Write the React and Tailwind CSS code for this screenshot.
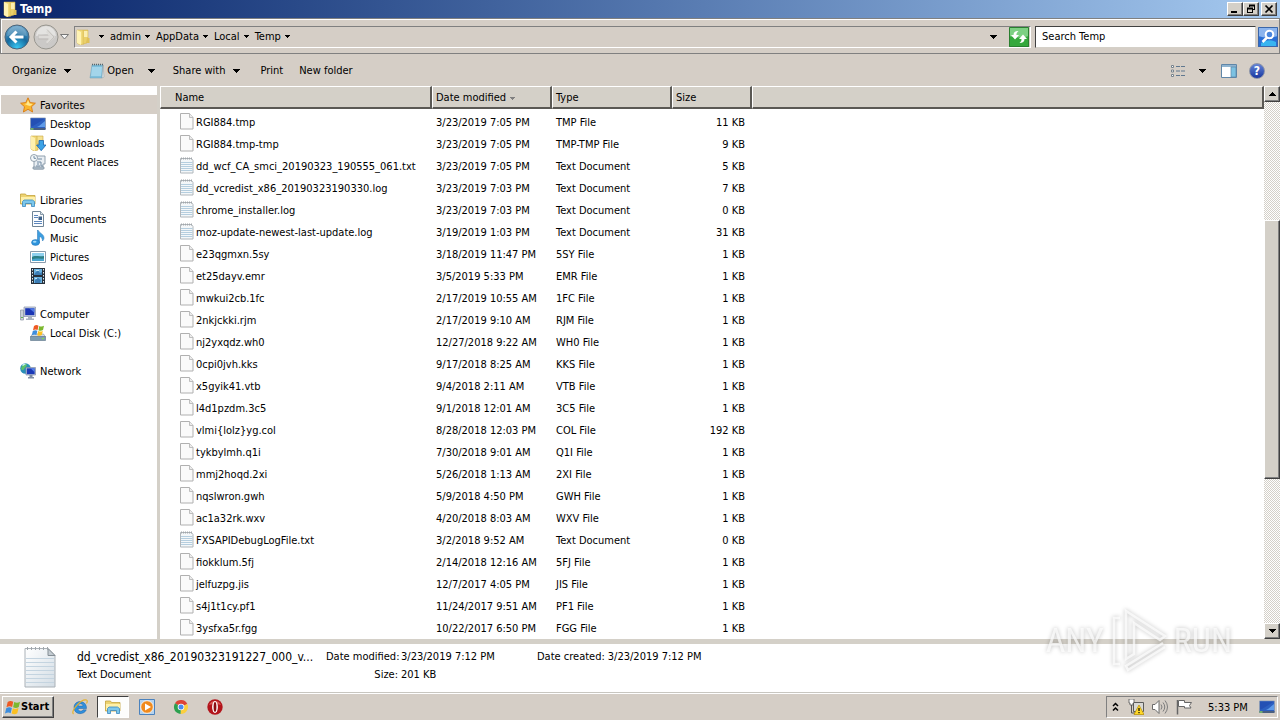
import { useId } from 'react';

/* ── Data ────────────────────────────────────────────────────────────────── */
const FILES = [
  ['RGI884.tmp', '3/23/2019 7:05 PM', 'TMP File', '11 KB'],
  ['RGI884.tmp-tmp', '3/23/2019 7:05 PM', 'TMP-TMP File', '9 KB'],
  ['dd_wcf_CA_smci_20190323_190555_061.txt', '3/23/2019 7:05 PM', 'Text Document', '5 KB'],
  ['dd_vcredist_x86_20190323190330.log', '3/23/2019 7:03 PM', 'Text Document', '7 KB'],
  ['chrome_installer.log', '3/23/2019 7:03 PM', 'Text Document', '0 KB'],
  ['moz-update-newest-last-update.log', '3/19/2019 1:03 PM', 'Text Document', '31 KB'],
  ['e23qgmxn.5sy', '3/18/2019 11:47 PM', '5SY File', '1 KB'],
  ['et25dayv.emr', '3/5/2019 5:33 PM', 'EMR File', '1 KB'],
  ['mwkui2cb.1fc', '2/17/2019 10:55 AM', '1FC File', '1 KB'],
  ['2nkjckki.rjm', '2/17/2019 9:10 AM', 'RJM File', '1 KB'],
  ['nj2yxqdz.wh0', '12/27/2018 9:22 AM', 'WH0 File', '1 KB'],
  ['0cpi0jvh.kks', '9/17/2018 8:25 AM', 'KKS File', '1 KB'],
  ['x5gyik41.vtb', '9/4/2018 2:11 AM', 'VTB File', '1 KB'],
  ['l4d1pzdm.3c5', '9/1/2018 12:01 AM', '3C5 File', '1 KB'],
  ['vlmi{lolz}yg.col', '8/28/2018 12:03 PM', 'COL File', '192 KB'],
  ['tykbylmh.q1i', '7/30/2018 9:01 AM', 'Q1I File', '1 KB'],
  ['mmj2hoqd.2xi', '5/26/2018 1:13 AM', '2XI File', '1 KB'],
  ['nqslwron.gwh', '5/9/2018 4:50 PM', 'GWH File', '1 KB'],
  ['ac1a32rk.wxv', '4/20/2018 8:03 AM', 'WXV File', '1 KB'],
  ['FXSAPIDebugLogFile.txt', '3/2/2018 9:52 AM', 'Text Document', '0 KB'],
  ['fiokklum.5fj', '2/14/2018 12:16 AM', '5FJ File', '1 KB'],
  ['jelfuzpg.jis', '12/7/2017 4:05 PM', 'JIS File', '1 KB'],
  ['s4j1t1cy.pf1', '11/24/2017 9:51 AM', 'PF1 File', '1 KB'],
  ['3ysfxa5r.fgg', '10/22/2017 6:50 PM', 'FGG File', '1 KB'],
];

const TREE = [
  { label: 'Favorites', icon: StarIcon, active: true, children: [
    ['Desktop', DesktopIcon], ['Downloads', DownloadsIcon], ['Recent Places', RecentIcon],
  ] },
  { label: 'Libraries', icon: LibraryIcon, children: [
    ['Documents', DocumentsIcon], ['Music', MusicIcon], ['Pictures', PicturesIcon], ['Videos', VideosIcon],
  ] },
  { label: 'Computer', icon: ComputerIcon, children: [['Local Disk (C:)', DiskIcon]] },
  { label: 'Network', icon: NetworkIcon, children: [] },
];

/* ── Icons ───────────────────────────────────────────────────────────────── */
function Svg({ children, className = 'size-4', box = '0 0 16 16' }) {
  return (
    <svg viewBox={box} className={`${className} shrink-0`} aria-hidden="true">
      {children}
    </svg>
  );
}

function Caret({ className = 'w-[7px] h-1' }) {
  return (
    <svg viewBox="0 0 7 4" className={`${className} shrink-0`} fill="currentColor" shapeRendering="crispEdges" aria-hidden="true">
      <path d="M0 0h7v1H6v1H5v1H4v1H3V3H2V2H1V1H0z" />
    </svg>
  );
}

function FolderIcon({ className }) {
  return (
    <Svg className={className}>
      <path d="M2 1h6l1 1v13l-4 1-3-2z" fill="#f2dc7c" stroke="#d3b04a" strokeWidth=".5" />
      <path d="M2 1l4 2v13l-4-2z" fill="#fff3b4" />
      <path d="M8 1h5v8l-1 5-4 1z" fill="#ead06a" stroke="#d3b04a" strokeWidth=".5" />
      <path d="M9 2h3.500v6H9z" fill="#fbeeb0" />
      <path d="M12 9h2.500v5H11z" fill="#dfc058" />
    </Svg>
  );
}

function StarIcon() {
  return (
    <Svg>
      <path d="M8 .8l2.200 4.800 5.200.6-3.900 3.500 1.100 5.300L8 12.300 3.400 15l1.100-5.300L.6 6.200l5.200-.6z" fill="#fbb62c" stroke="#d97a12" strokeWidth=".9" />
      <path d="M8 3l1.500 3.600 3.200.4-2.600 2.100L8 8.500 4.500 7l2.200-.4z" fill="#ffe88e" />
    </Svg>
  );
}

function DesktopIcon() {
  return (
    <Svg>
      <path d="M.5 2h15v11H.5z" fill="#2c5fc0" stroke="#8b9bb4" strokeWidth=".8" />
      <path d="M1 2.500h14L3 10l-2 .5z" fill="#2450b4" />
      <path d="M9 10l6-5v6H7z" fill="#5f9be8" />
      <path d="M.5 12h15v2H.5z" fill="#4a5f80" />
      <path d="M.5 12h3v2h-3z" fill="#6fae72" />
    </Svg>
  );
}

function DownloadsIcon() {
  return (
    <Svg>
      <path d="M1 1h6l1 1v13l-4 1-3-2z" fill="#f0d878" stroke="#c9a63c" strokeWidth=".6" />
      <path d="M1 1l4 2v13l-4-2z" fill="#fff0ae" />
      <path d="M7 1h6v8H7z" fill="#f5e291" stroke="#c9a63c" strokeWidth=".6" />
      <path d="M9 5.500h4.500v4.500H16l-4.800 5.700L6.500 10H9z" fill="#3ba2e6" stroke="#1b62ad" strokeWidth=".8" />
    </Svg>
  );
}

function RecentIcon() {
  return (
    <Svg>
      <path d="M5 2h10v8h-2v5H4V6h1z" fill="#e9eef3" stroke="#8696a6" strokeWidth=".9" />
      <circle cx="4" cy="4" r="3.500" fill="#f5f8fa" stroke="#8a98a6" strokeWidth=".9" />
      <path d="M4 2v2.300h2M8 5h4M7 8h4M7 10h2M11 8v4h2M6 12h4" fill="none" stroke="#708aa2" />
      <path d="M3 13h11v2H3z" fill="#b8c6d2" stroke="#7b8d9f" strokeWidth=".7" />
    </Svg>
  );
}

function LibraryIcon() {
  return (
    <Svg>
      <path d="M.5 3V2h5l1 1.500h8.500V12H.5z" fill="#edd371" stroke="#c4a23c" strokeWidth=".8" />
      <path d="M1 5h14v6H1z" fill="#fff0a8" />
      <path d="M2.500 14.500v-5l1.500-1.500h8.500l2 1.500v5h-3v-3h-6v3z" fill="#7cc7ec" stroke="#3b88be" strokeWidth=".8" />
    </Svg>
  );
}

function DocumentsIcon() {
  return (
    <Svg>
      <path d="M2.500.5h8l3 3v12h-11z" fill="#fbfdff" stroke="#6f8496" />
      <path d="M10.500.5v3h3" fill="#dbe4ea" stroke="#6f8496" strokeWidth=".8" />
      <path d="M4 4.500h4M4 6.500h4M4 10.500h8M4 12.500h8" stroke="#4a78b4" strokeWidth=".9" />
      <path d="M8.500 5.500h3.500v3.500H8.500z" fill="#3c6089" />
    </Svg>
  );
}

function MusicIcon() {
  return (
    <Svg>
      <path d="M8 0c1 3 6 4 6 8 0 1-.5 2-1.500 3 0-3-1.500-4-3-4.500V13H7.500V0z" fill="#3c9ee0" stroke="#2272b4" strokeWidth=".5" />
      <ellipse cx="5.500" cy="12.500" rx="4" ry="2.900" fill="#2f94dc" stroke="#2272b4" strokeWidth=".5" />
      <ellipse cx="4.700" cy="11.800" rx="1.800" ry="1" fill="#a5dcfa" />
    </Svg>
  );
}

function PicturesIcon() {
  return (
    <Svg>
      <path d="M.5 2.500h15v11H.5z" fill="#fff" stroke="#8a9bac" />
      <path d="M2 4h12v8H2z" fill="#8fd0ee" />
      <path d="M2 8c3-2 6 0 12-1v5H2z" fill="#2d7f86" />
      <path d="M2 10.500c4-2 8 0 12-1V12H2z" fill="#49a5cf" />
    </Svg>
  );
}

function VideosIcon() {
  return (
    <Svg>
      <path d="M1 0h14v16H1z" fill="#27313c" />
      <path d="M4 1h8v6H4zM4 9h8v6H4z" fill="#6ab2e0" />
      <path d="M5 5l3-3 2 3 2-1v3H4zM5 12l3-2 3 2-1 3H5z" fill="#3b7cb4" />
      <path d="M6 2h3v1H6zM5 10h2v1H5z" fill="#c3e4f5" />
      <path d="M2.500 1v15M13.500 1v15" stroke="#e6ecf0" strokeDasharray="1.500 1.500" />
    </Svg>
  );
}

function ComputerIcon() {
  return (
    <Svg>
      <path d="M.5 4h3v10h-3z" fill="#c9d1d8" stroke="#8994a0" strokeWidth=".7" />
      <path d="M1 11h2v1H1z" fill="#62b052" />
      <path d="M4 1h11.500v9.500H4z" fill="#cfd6e2" stroke="#8490a6" strokeWidth=".7" />
      <path d="M5.200 2.200h9.200v7H5.200z" fill="#1a35b4" />
      <path d="M9 2.200h5.400v4.500z" fill="#4f78e2" />
      <path d="M8 10.500h4v2h2v1.500H6v-1.500h2z" fill="#a8b2c0" />
    </Svg>
  );
}

function WinFlag() {
  return (
    <>
      <path d="M3 2c2-1.300 3-1 4.500-.3L6.600 6C5 5.200 4 5.200 2 6.200z" fill="#ee5a24" />
      <path d="M8.300 2c1.500.7 3 .8 4.700-.2L12 6c-1.500 1-3 .9-4.600.2z" fill="#7cb82f" />
      <path d="M1.800 7c1.900-1 3-.9 4.600-.2l-1 4.200C4 10.300 2.800 10.300.8 11.300z" fill="#3d8ede" />
      <path d="M7.200 7c1.500.7 2.900.8 4.600-.1l-1 4.200c-1.500 1-3 .9-4.600.1z" fill="#fbc022" />
    </>
  );
}

function DiskIcon() {
  return (
    <Svg>
      <path d="M2.500 9h11l2 3H.5z" fill="#d4dbe2" stroke="#8592a0" strokeWidth=".6" />
      <path d="M.5 11.500h15v4H.5z" fill="#7c9cb0" stroke="#5a7286" strokeWidth=".6" />
      <path d="M12 13.500h2" stroke="#7fe04c" />
      <g transform="translate(1 -1)"><WinFlag /></g>
    </Svg>
  );
}

function NetworkIcon() {
  return (
    <Svg>
      <circle cx="5.500" cy="5.500" r="5.300" fill="#2a8fb8" />
      <path d="M2 3c2-3 5-2 5-1S5 4 4 6s-2 1-3 0zM6 6l3-1v3l-3 2z" fill="#5cc26a" />
      <path d="M2 2c1-1 3-1.500 4-1L3 3z" fill="#c7eef4" />
      <path d="M6 4.500h9.500v7.500H6z" fill="#cfd6e2" stroke="#7c88a0" strokeWidth=".7" />
      <path d="M6.800 5.300h7.900v5.900H6.800z" fill="#1b39b8" />
      <path d="M10.500 5.300h4.200v4z" fill="#5580e6" />
      <path d="M9.500 12h3v2h1.500v1.500H8V14h1.500z" fill="#7f8da4" />
    </Svg>
  );
}

function BlankFileIcon() {
  return (
    <svg viewBox="0 0 14 17" className="w-3.5 h-[17px] shrink-0" aria-hidden="true">
      <path d="M.5.5h9l3.500 4v11.500H.5z" fill="#fafafa" stroke="#b0b0b0" />
      <path d="M9.500.5v4H13" fill="#ebebeb" stroke="#b0b0b0" strokeWidth=".8" />
    </svg>
  );
}

function TextFileIcon() {
  return (
    <svg viewBox="0 0 14 17" className="w-3.5 h-[17px] shrink-0" aria-hidden="true">
      <path d="M.5 1.500h11l1.500 2V16H.5z" fill="#f4f7f9" stroke="#b0b6bb" />
      <path d="M1 5.500h11.500M1 7.500h11.500M1 9.500h11.500M1 11.500h11.500M1 13.500h11.500" stroke="#b5cedf" />
      <path d="M1 1.500h11" stroke="#a3a8ac" strokeWidth="2" strokeDasharray="1 1" />
    </svg>
  );
}

function BigTextFileIcon() {
  const id = useId();
  return (
    <svg viewBox="0 0 34 42" className="w-[34px] h-[42px] shrink-0" aria-hidden="true">
      <linearGradient id={id} x2="1" y2="1">
        <stop stopColor="#fff" />
        <stop offset="1" stopColor="#d3dde5" />
      </linearGradient>
      <path d="M2 2.500h23l7 7V41H2z" fill={`url(#${id})`} stroke="#aab1b7" />
      <path d="M3 12.500h28M3 16.500h28M3 20.500h28M3 24.500h28M3 28.500h28M3 32.500h28M3 36.500h28" stroke="#c4d4e0" />
      <path d="M25 2.500v7h7z" fill="#c4ccd2" stroke="#858e95" />
      <path d="M4 2.500h21" stroke="#a0a6ab" strokeWidth="3" strokeDasharray="1 3" />
    </svg>
  );
}

function NotepadIcon() {
  return (
    <Svg>
      <path d="M3 2h11l-1 13H1z" fill="#7fc0dc" stroke="#6b9cb4" strokeWidth=".5" />
      <path d="M3 4h10l-1 9H2z" fill="#a3d5ea" />
      <path d="M14 2l1 12-2 1z" fill="#e9eef0" stroke="#8d9ca4" strokeWidth=".5" />
      <path d="M3 1.500h11" stroke="#55666e" strokeWidth="1.500" strokeDasharray="1 1" />
    </Svg>
  );
}

function BackIcon() {
  const id = useId();
  return (
    <Svg className="size-[26px]" box="0 0 26 26">
      <radialGradient id={id} cx=".5" cy=".95" r=".95">
        <stop stopColor="#38c8f4" />
        <stop offset=".5" stopColor="#176a9e" />
        <stop offset="1" stopColor="#6aa5cb" />
      </radialGradient>
      <circle cx="13" cy="13" r="12" fill={`url(#${id})`} stroke="#4d6478" />
      <path d="M3 12a10 10 0 0 1 20 0q-10-3-20 0z" fill="#fff" opacity=".2" />
      <path d="M12.500 7.500L7 13l5.500 5.500M8 13h11.500" fill="none" stroke="#fff" strokeWidth="3" />
    </Svg>
  );
}

function ForwardIcon() {
  return (
    <Svg className="size-[26px]" box="0 0 26 26">
      <circle cx="13" cy="13" r="12" fill="#cbc9c7" stroke="#98968f" />
      <path d="M3 12a10 10 0 0 1 20 0q-10-3-20 0z" fill="#e4e3e1" />
      <path d="M14 7l6 6-6 6M19 13H6" fill="none" stroke="#dddbd8" strokeWidth="3" />
      <path d="M14 5.500l7 7.500-7 7.500M5 11h10M5 15h10" fill="none" stroke="#b9b6b1" strokeWidth=".7" />
    </Svg>
  );
}

function RefreshIcon() {
  return (
    <Svg className="size-5" box="0 0 20 20">
      <path d="M0 0h20v20H0z" fill="#35a83c" />
      <path d="M0 0h20v9q-10 3-20 0z" fill="#7dd083" />
      <path d="M.5.5h19v19H.5z" fill="none" stroke="#2a7f30" />
      <path d="M9.500 4Q4.500 4 4.500 8H2l4 4.500L10 8H7.500Q7 6 9.500 4z" fill="#fff" />
      <path d="M10.500 16q5 0 5-4H18l-4-4.500L10 12h2.500q.5 2-2 4z" fill="#fff" />
    </Svg>
  );
}

function SearchIcon() {
  return (
    <Svg className="size-5" box="0 0 20 20">
      <path d="M0 0h20v20H0z" fill="#2a6ed4" />
      <path d="M0 0h20v9q-10 3-20 0z" fill="#8bb4ee" />
      <path d="M3 16q7-5 15-1v4H3z" fill="#38b4f0" />
      <path d="M.5.5h19v19H.5z" fill="none" stroke="#3b66a8" />
      <circle cx="11.500" cy="7.500" r="3.800" fill="#4a86dd" stroke="#fff" strokeWidth="2" />
      <path d="M9 10.500L4.500 15" stroke="#fff" strokeWidth="2.500" />
    </Svg>
  );
}

function ViewIcon() {
  return (
    <Svg>
      <path d="M1.500 2.500h2v2h-2zM1.500 7h2v2h-2zM1.500 11.500h2v2h-2z" fill="#fff" stroke="#76828c" />
      <path d="M6 3.500h4M11 3.500h4M6 8h4M11 8h4M6 12.500h4M11 12.500h4" stroke="#60788f" />
    </Svg>
  );
}

function PaneIcon() {
  return (
    <Svg>
      <path d="M.5 1.500h15v13H.5z" fill="#fff" stroke="#5f86a8" />
      <path d="M1 2h14v2H1z" fill="#8fb4d0" />
      <path d="M10 4h5v10h-5z" fill="#7cc2e2" stroke="#5f86a8" strokeWidth=".7" />
    </Svg>
  );
}

function HelpIcon() {
  return (
    <span className="flex size-4 items-center justify-center rounded-full border border-[#8b93a8] bg-linear-to-b from-[#6583d6] to-[#1b36a0] text-[12px] leading-3 font-bold text-white">
      ?
    </span>
  );
}

function IeIcon() {
  return (
    <Svg>
      <path d="M14.500 9.500H6c.2 3 4 3.500 5 1.300h3.300C12 16.500 2 16 2 8.500 2 .5 14.800.3 14.500 9.500zM6 7h5C10.500 4 6.500 4 6 7z" fill="#2e8fdc" fillRule="evenodd" stroke="#1a61a8" strokeWidth=".5" />
      <path d="M1.500 15C-1.500 12 9-.5 14.500 1c1 .3 1 2 0 3.500" fill="none" stroke="#e5b22c" strokeWidth="1.200" />
    </Svg>
  );
}

function MediaIcon() {
  return (
    <Svg>
      <path d="M.5.5h15v15H.5z" fill="#b5d3ee" stroke="#4b82bd" />
      <circle cx="8" cy="8" r="6.300" fill="#f08a1d" stroke="#fff" strokeWidth=".8" />
      <path d="M6 4.500l6 3.500-6 3.500z" fill="#fff" />
    </Svg>
  );
}

function ChromeIcon() {
  return (
    <Svg>
      <path d="M8 8L2 4.300A7 7 0 0 1 14.300 5z" fill="#dd4437" />
      <path d="M8 8l6.300-3A7 7 0 0 1 7.500 15z" fill="#fbcf3e" />
      <path d="M8 8l-.5 7A7 7 0 0 1 2 4.300z" fill="#2da04f" />
      <circle cx="8" cy="8" r="3.300" fill="#fff" />
      <circle cx="8" cy="8" r="2.500" fill="#4a8bf0" />
    </Svg>
  );
}

function OperaIcon() {
  return (
    <Svg>
      <circle cx="8" cy="8" r="7.700" fill="#b3141b" />
      <path d="M2 6a6.500 6.500 0 0 1 12 0q-6-2-12 0z" fill="#d95553" />
      <ellipse cx="8" cy="8" rx="2.900" ry="5.900" fill="#fff" />
      <ellipse cx="8" cy="8" rx="1.400" ry="4.900" fill="#8c0c12" />
    </Svg>
  );
}

function TrayNetIcon() {
  return (
    <Svg>
      <path d="M5.500 3.500h10v9h-10z" fill="#d9d9d6" stroke="#5b5b5b" />
      <path d="M1 0h5v4H5v2H2V4H1z" fill="#fff" stroke="#555" strokeWidth=".8" />
      <path d="M3.500 6v8H9" fill="none" stroke="#555" />
      <path d="M11 6l5 9.500H6z" fill="#ffd829" stroke="#b38b00" strokeWidth=".7" />
      <path d="M11 9v3M11 13v1.300" stroke="#000" strokeWidth="1.200" />
    </Svg>
  );
}

function SoundIcon() {
  return (
    <Svg>
      <path d="M.5 5.500H3L7 1.500v13L3 10.500H.5z" fill="#fff" stroke="#6b6b6b" />
      <path d="M9 5.500q2 2.500 0 5M11 3.500q3.500 4.500 0 9M13 1.500q5 6.500 0 13" fill="none" stroke="#7c7c7c" />
    </Svg>
  );
}

function FlagIcon() {
  return (
    <Svg>
      <path d="M1.500 1v14.500" stroke="#666" strokeWidth="1.500" />
      <path d="M2.500 1.500h6v2h7l-2 3 1.500 2.500H8.500v-1.500h-6z" fill="#fff" stroke="#666" />
    </Svg>
  );
}

/* ── Window chrome ───────────────────────────────────────────────────────── */
const RAISED = 'border border-t-white border-l-white border-r-[#404040] border-b-[#404040] shadow-[inset_-1px_-1px_0_#808080]';

function TitleBar() {
  const btn = `flex h-[14px] w-4 items-center justify-center bg-[#d4d0c8] ${RAISED}`;
  return (
    <header className="flex h-[18px] shrink-0 items-center bg-linear-to-r from-[#0a246a] to-[#a6caf0] pr-[3px] pl-[2px] text-white">
      <FolderIcon className="size-4" />
      <h1 className="pl-[2px] text-[12px] leading-4 font-bold">Temp</h1>
      <div className="ml-auto flex">
        <button type="button" aria-label="Minimize" className={btn}>
          <Svg className="size-[10px]" box="0 0 10 10"><path d="M1 7h6v2H1z" fill="#000" /></Svg>
        </button>
        <button type="button" aria-label="Restore" className={btn}>
          <Svg className="size-[10px]" box="0 0 10 10">
            <path d="M3 .5h6v2H3zM8 2h1v4H7V5h1zM3 2h1v1H3zM1 3.500h6v2H1zM1 5h1v4H1zM6 5h1v4H6zM1 8h6v1H1z" fill="#000" />
          </Svg>
        </button>
        <button type="button" aria-label="Close" className={`${btn} ml-[2px]`}>
          <Svg className="size-[10px]" box="0 0 10 10"><path d="M1.500 1.500l7 7M8.500 1.500l-7 7" stroke="#000" strokeWidth="1.700" /></Svg>
        </button>
      </div>
    </header>
  );
}

function AddressBar() {
  return (
    <div className="flex h-9 shrink-0 items-center border border-[#808080] bg-[#d5cec6] pt-px pl-[3px] shadow-[inset_1px_1px_0_#fff,0_1px_0_#fff]">
      <button type="button" aria-label="Back"><BackIcon /></button>
      <button type="button" aria-label="Forward" className="ml-[3px]"><ForwardIcon /></button>
      <button type="button" aria-label="Recent locations" className="ml-px">
        <Svg className="w-[9px] h-[6px]" box="0 0 9 6"><path d="M.5.5h8l-4 4.500z" fill="#f5f5f5" stroke="#777" /></Svg>
      </button>
      <nav aria-label="Address" className="ml-[5px] flex h-[22px] min-w-0 flex-1 items-center border border-t-[#808080] border-r-white border-b-white border-l-[#808080]">
        <FolderIcon className="size-4" />
        <button type="button" aria-label="Root" className="flex w-[13px] justify-end"><Caret className="w-[5px] h-[3px]" /></button>
        {['admin', 'AppData', 'Local', 'Temp'].map((part) => (
          <button key={part} type="button" className="flex items-center gap-1 pl-[6px]">
            {part}
            <Caret className="w-[5px] h-[3px]" />
          </button>
        ))}
        <button type="button" aria-label="Previous locations" className="ml-auto pr-3"><Caret /></button>
        <button type="button" aria-label="Refresh" className="pr-px"><RefreshIcon /></button>
      </nav>
      <form className="ml-1 flex items-center gap-[2px] pr-px" onSubmit={(e) => e.preventDefault()}>
        <input
          type="text"
          aria-label="Search Temp"
          defaultValue="Search Temp"
          className="h-[22px] w-[221px] border border-t-[#404040] border-r-[#d4d0c8] border-b-[#d4d0c8] border-l-[#404040] bg-white pl-[6px] outline-none"
        />
        <button type="submit" aria-label="Search"><SearchIcon /></button>
      </form>
    </div>
  );
}

function Toolbar() {
  return (
    <div className="flex h-8 shrink-0 items-center bg-[#d5cec6] pt-px pr-[15px] pl-3">
      <button type="button" className="flex items-center gap-2">Organize <Caret /></button>
      <button type="button" className="ml-[18px] flex items-center gap-[2px]"><NotepadIcon /> Open</button>
      <button type="button" aria-label="Open with" className="ml-[14px]"><Caret /></button>
      <button type="button" className="ml-[18px] flex items-center gap-2">Share with <Caret /></button>
      <button type="button" className="ml-5">Print</button>
      <button type="button" className="ml-4">New folder</button>
      <button type="button" aria-label="Change view" className="ml-auto"><ViewIcon /></button>
      <button type="button" aria-label="More views" className="ml-[13px]"><Caret /></button>
      <button type="button" aria-label="Preview pane" className="ml-[15px]"><PaneIcon /></button>
      <button type="button" aria-label="Help" className="ml-3"><HelpIcon /></button>
    </div>
  );
}

/* ── Navigation pane ─────────────────────────────────────────────────────── */
function Sidebar() {
  return (
    <nav aria-label="Folders" className="flex w-[157px] shrink-0 flex-col gap-[19px] overflow-hidden pt-[9px]">
      {TREE.map(({ label, icon: Icon, active, children }) => (
        <ul key={label}>
          <li>
            <a href="#" className={`ml-px flex h-[19px] items-center gap-1 pl-[19px] ${active ? 'bg-[#d5cec6]' : ''}`}>
              <Icon />
              <span className="pt-[2px]">{label}</span>
            </a>
          </li>
          {children.map(([name, ChildIcon]) => (
            <li key={name}>
              <a href="#" className="flex h-[19px] items-center gap-1 pl-[30px]">
                <ChildIcon />
                <span className="pt-[2px]">{name}</span>
              </a>
            </li>
          ))}
        </ul>
      ))}
    </nav>
  );
}

/* ── File list ───────────────────────────────────────────────────────────── */
function HeadCell({ children, className = '' }) {
  return (
    <th scope="col" className="p-0 pb-[2px] text-left font-normal">
      <div className={`flex h-[23px] items-center border-t border-r-2 border-b-2 border-l border-t-white border-r-[#5a5854] border-b-[#5a5854] border-l-white bg-[#d4d0c8] pt-[2px] ${className}`}>
        {children}
      </div>
    </th>
  );
}

function FileList() {
  return (
    <main className="min-w-0 flex-1 overflow-hidden">
      <table className="w-full table-fixed border-collapse">
        <colgroup>
          <col className="w-[272px]" />
          <col className="w-[120px]" />
          <col className="w-[120px]" />
          <col className="w-20" />
          <col />
        </colgroup>
        <thead>
          <tr>
            <HeadCell className="pl-[14px]">Name</HeadCell>
            <HeadCell className="gap-1 pl-[3px]">
              Date modified <Caret className="w-[5px] h-[3px] text-[#808080]" />
            </HeadCell>
            <HeadCell className="pl-[3px]">Type</HeadCell>
            <HeadCell className="pl-[3px]">Size</HeadCell>
            <HeadCell />
          </tr>
        </thead>
        <tbody>
          {FILES.map(([name, date, type, size]) => (
            <tr key={name} className="h-[22px] whitespace-nowrap">
              <td className="p-0 pl-5">
                <div className="flex items-start gap-[2px]">
                  {type === 'Text Document' ? <TextFileIcon /> : <BlankFileIcon />}
                  <span className="pt-[2px]">{name}</span>
                </div>
              </td>
              <td className="p-0 pt-[2px] pl-1">{date}</td>
              <td className="p-0 pt-[2px] pl-1">{type}</td>
              <td className="p-0 pt-[2px] pr-[7px] text-right">{size}</td>
              <td className="p-0" />
            </tr>
          ))}
        </tbody>
      </table>
    </main>
  );
}

function ScrollBar() {
  const btn = `flex h-4 shrink-0 items-center justify-center bg-[#d4d0c8] ${RAISED}`;
  return (
    <div className="flex w-4 shrink-0 flex-col bg-[repeating-conic-gradient(#fff_0_25%,#d4d0c8_0_50%)] bg-[length:2px_2px]">
      <button type="button" aria-label="Scroll up" className={btn}><Caret className="w-[7px] h-1 rotate-180" /></button>
      <div className="flex flex-1 flex-col">
        <div className="flex-[118]" />
        <div className={`flex-[258] bg-[#d4d0c8] ${RAISED}`} />
        <div className="flex-[145]" />
      </div>
      <button type="button" aria-label="Scroll down" className={btn}><Caret /></button>
    </div>
  );
}

/* ── Details pane and taskbar ────────────────────────────────────────────── */
function DetailsPane() {
  return (
    <footer className="flex h-[54px] shrink-0 border-t-[5px] border-b border-t-[#d4d0c8] border-b-[#c8c6c0] bg-white pt-[2px] pl-[23px]">
      <BigTextFileIcon />
      <div className="grid grid-cols-[249px_75px_136px_auto_auto] grid-rows-[18px_18px] items-center pt-[2px] pl-5 whitespace-nowrap">
        <span className="text-[12px]">dd_vcredist_x86_20190323191227_000_v...</span>
        <span className="pr-[3px] text-right">Date modified:</span>
        <span>3/23/2019 7:12 PM</span>
        <span className="pr-[3px]">Date created:</span>
        <span>3/23/2019 7:12 PM</span>
        <span>Text Document</span>
        <span className="pr-[3px] text-right">Size:</span>
        <span>201 KB</span>
      </div>
    </footer>
  );
}

function Taskbar() {
  return (
    <div className="flex h-[27px] shrink-0 items-center border-t border-white bg-[#d5cec6] pr-[2px] pl-[2px]">
      <button type="button" className={`flex h-[22px] w-[52px] items-center gap-px bg-[#d4d0c8] pl-px text-[11px] font-bold ${RAISED}`}>
        <Svg box="0 0 13 12"><WinFlag /></Svg>
        Start
      </button>
      <div className="flex items-center pl-[18px]">
        <button type="button" aria-label="Internet Explorer"><IeIcon /></button>
        <button type="button" aria-label="Windows Explorer" className="mr-[10px] ml-[9px] flex h-[22px] w-8 items-center justify-center border border-t-[#404040] border-r-white border-b-white border-l-[#404040] bg-[#fdfdfc]">
          <LibraryIcon />
        </button>
        <button type="button" aria-label="Media Player"><MediaIcon /></button>
        <button type="button" aria-label="Chrome" className="ml-[18px]"><ChromeIcon /></button>
        <button type="button" aria-label="Opera" className="ml-[18px]"><OperaIcon /></button>
      </div>
      <div className="ml-auto flex h-[22px] items-center border border-t-[#808080] border-r-white border-b-white border-l-[#808080] pl-[5px]">
        <button type="button" aria-label="Show hidden icons">
          <Svg className="w-[7px] h-[10px]" box="0 0 7 10"><path d="M1 4l2.500-2.500L6 4M1 8.500L3.500 6 6 8.500" fill="none" stroke="#000" strokeWidth="1.500" /></Svg>
        </button>
        <div className="flex items-center gap-2 pl-[9px]">
          <TrayNetIcon />
          <SoundIcon />
          <FlagIcon />
        </div>
        <time className="w-[58px] pt-px pl-4 whitespace-nowrap">5:33 PM</time>
        <button type="button" aria-label="Show desktop" className="pr-[2px] pl-[9px]"><DesktopIcon /></button>
      </div>
    </div>
  );
}

function Watermark() {
  return (
    <div className="pointer-events-none absolute right-12 bottom-[46px] flex h-[68px] items-center gap-[6px] font-['Roboto_Condensed','Open_Sans_Condensed','Roboto',sans-serif] text-[34px] leading-none text-white/70 drop-shadow-[0_0_2px_rgba(0,0,0,0.35)]">
      <span>ANY</span>
      <svg viewBox="0 0 58 68" className="h-[68px] w-[58px]" fill="none" stroke="currentColor" strokeWidth="2.500" aria-hidden="true">
        <path d="M10 12H4v46h6" />
        <path d="M24 48l-8 5V5l39 25-5 4-26-17z" />
        <path d="M53 37L16 60l2 4 37-23" />
      </svg>
      <span>RUN</span>
    </div>
  );
}

export default function App() {
  return (
    <div className="relative flex h-screen flex-col overflow-hidden bg-white font-['DejaVu_Sans_Condensed','DejaVu_Sans',sans-serif] text-[11px] leading-4 text-black">
      <TitleBar />
      <AddressBar />
      <Toolbar />
      <div className="flex min-h-0 flex-1">
        <Sidebar />
        <div className="w-[3px] shrink-0 bg-[#d4d0c8]" />
        <FileList />
        <ScrollBar />
      </div>
      <DetailsPane />
      <Taskbar />
      <Watermark />
    </div>
  );
}
